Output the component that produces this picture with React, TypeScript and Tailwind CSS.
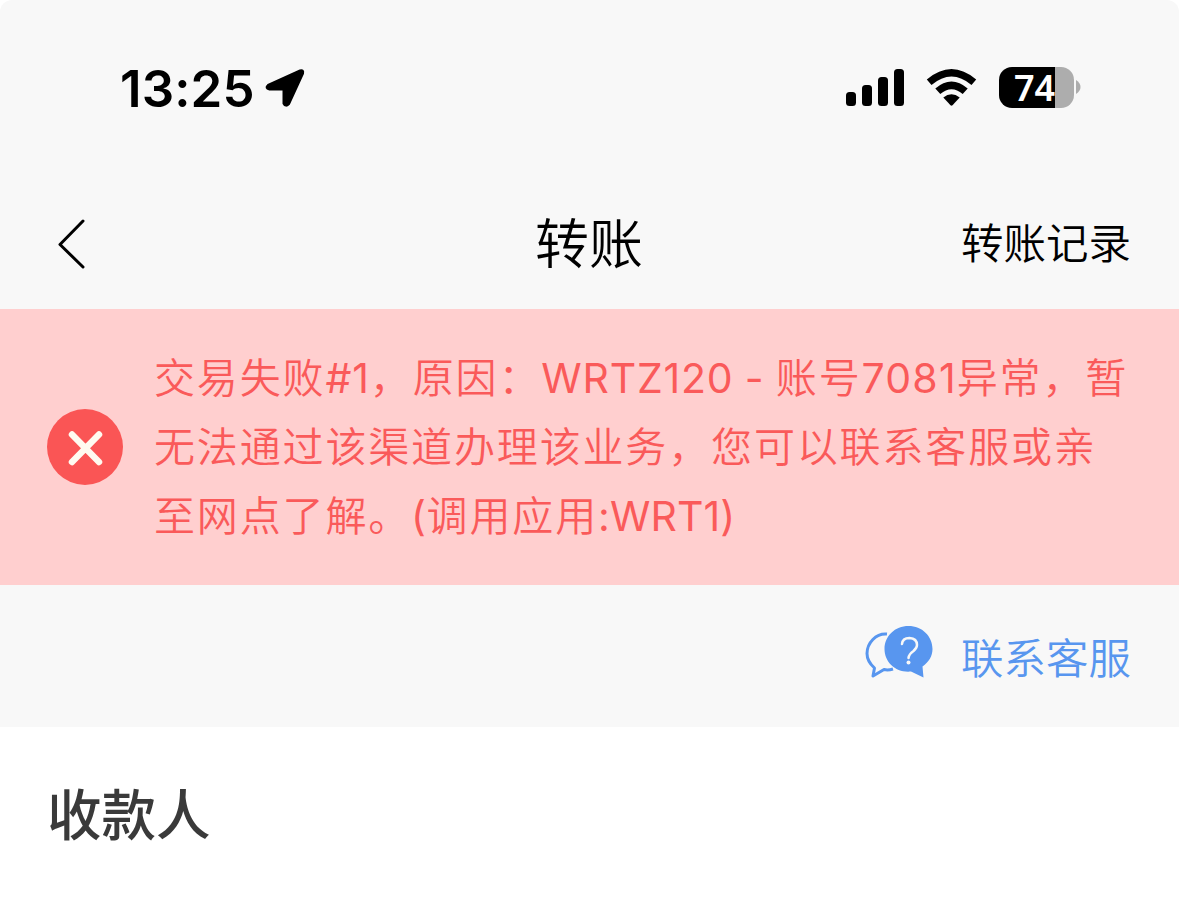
// 提示文案，按行、按中西文分段展示
type Segment = { text: string; className?: string };

const ERROR_LINES: Segment[][] = [
  [
    { text: '交易失败' },
    { text: '#1', className: 'font-[370] tracking-[0.9px]' },
    { text: '，原因：' },
    { text: 'WRTZ120 - ', className: 'font-[370] tracking-[0.8px] [word-spacing:-1px]' },
    { text: '账号' },
    { text: '7081', className: 'font-[370] tracking-[1.2px]' },
    { text: '异常，暂' },
  ],
  [{ text: '无法通过该渠道办理该业务，您可以联系客服或亲' }],
  [
    { text: '至网点了解。' },
    { text: '(', className: 'font-[370] tracking-[0.5px]' },
    { text: '调用应用' },
    { text: ':WRT1)', className: 'font-[370] tracking-[0.1px]' },
  ],
];

function StatusBar() {
  return (
    <div className="flex h-[176px] items-center justify-between pl-[120px] pr-[98px]">
      <div className="flex items-center">
        <span className="mt-[1px] w-[133px] whitespace-nowrap text-[51px] leading-[60px] font-[570] tracking-[0.1px] text-black">
          13:25
        </span>
        <svg className="ml-3 h-[40px] w-[40px]" viewBox="0 0 40 40">
          <path
            d="M3 17 35 2.500Q39 1.500 38 5.500L24 36Q20.500 39.500 18.500 35.500V21.500H4.500Q-.5 20 3 17Z"
            stroke="#000"
            strokeWidth="2"
            strokeLinejoin="round"
          />
        </svg>
      </div>

      <div className="flex items-center">
        {/* 信号 */}
        <svg className="mb-[2px] h-[38px] w-[58px]" viewBox="0 0 58 38">
          <rect x="0" y="24" width="10" height="14" rx="3.500" />
          <rect x="16" y="17" width="10" height="21" rx="3.500" />
          <rect x="32" y="9" width="10" height="29" rx="3.500" />
          <rect x="48" y="1" width="10" height="37" rx="3.500" />
        </svg>
        {/* Wi-Fi */}
        <svg className="mb-[2px] ml-[22px] h-[38px] w-[51px]" viewBox="0 0 51 38">
          <path d="M.8 11.500Q25.500-9.500 50.200 11.500L45.500 17Q25.500 0 5.500 17Z" />
          <path d="M9.300 20.500Q25.500 6.500 41.700 20.500L36.700 26Q25.500 16.500 14.300 26Z" />
          <path d="M17.300 29.500Q25.500 23 33.700 29.500L26.500 37.300Q25.500 38 24.500 37.300Z" />
        </svg>
        {/* 电量 */}
        <div className="mb-[2px] ml-[22px] flex h-[41px] w-[75px] items-center rounded-[13px] bg-[linear-gradient(to_right,#000_56px,#adadad_56px)] pl-[15px]">
          <span className="font-['Noto_Sans',sans-serif] text-[36px] font-semibold leading-[41px] text-white">74</span>
        </div>
        <svg className="mb-[2px] ml-[2px] h-[14px] w-[5px]" viewBox="0 0 5 14">
          <path d="M0 0Q4.500 3 4.500 7T0 14Z" fill="#adadad" />
        </svg>
      </div>
    </div>
  );
}

function NavBar() {
  return (
    <div className="flex h-[133px] items-center justify-between pl-[57px] pr-[48px] text-black">
      <svg className="mt-[2px] h-[50px] w-[170px]" viewBox="0 0 170 50" fill="none">
        <path d="M26 2 3 25.500 26 48" stroke="#000" strokeWidth="3" strokeLinecap="round" strokeLinejoin="round" />
      </svg>
      <h1 className="mt-[4px] mr-[10px] text-[54px] font-[350] leading-[80px]">转账</h1>
      <span className="mt-[2px] text-[42.500px] font-[350] leading-[60px]">转账记录</span>
    </div>
  );
}

function ErrorBanner() {
  return (
    <div className="flex h-[276px] items-center bg-[#ffcfcf] pl-[47px] text-[#fa5a5a]">
      <svg className="mb-[1px] h-[76px] w-[76px] shrink-0" viewBox="0 0 76 76">
        <circle cx="38" cy="38" r="38" fill="#fa5555" />
        <path d="M25 25.500 52 53M52 25.500 25 53" stroke="#fffaf0" strokeWidth="6.500" strokeLinecap="round" />
      </svg>
      <div className="ml-[31px]">
        {ERROR_LINES.map((line, lineIndex) => (
          <p
            key={lineIndex}
            className="whitespace-pre text-[41px] font-[350] leading-[69px] tracking-[1.850px]"
          >
            {line.map((segment) => (
              <span key={segment.text} className={segment.className}>
                {segment.text}
              </span>
            ))}
          </p>
        ))}
      </div>
    </div>
  );
}

function ContactService() {
  return (
    <div className="flex h-[142px] items-center justify-end pr-[48px] text-[#5896ef]">
      <svg className="mb-[8px] h-[54px] w-[70px]" viewBox="0 0 70 54" fill="none">
        <path
          d="M22 9C11 8 2 18 2 28.500C2 35 5 39 9.500 43L8 51L19 44.500Q23 45.500 28 44"
          stroke="currentColor"
          strokeWidth="3"
          strokeLinejoin="round"
        />
        <path
          d="M43.500 1C57 1 67.500 11 67.500 24C67.500 31 64 37 57.500 41.500L58.500 52.500L46 46.500C31 48 19.500 37.500 19.500 24C19.500 11 30 1 43.500 1Z"
          fill="currentColor"
        />
        <path
          d="M37 19Q37.500 13 44.500 13Q52 13.500 52 20Q52 23 48.500 26Q44 29 43.500 33"
          stroke="#f8f8f8"
          strokeWidth="2.500"
          strokeLinecap="round"
        />
        <circle cx="43.500" cy="37.500" r="2" fill="#f8f8f8" />
      </svg>
      <span className="mt-[6px] ml-[26px] text-[42.500px] font-[350] leading-[60px]">联系客服</span>
    </div>
  );
}

export default function App() {
  return (
    <div className="h-[900px] w-[1179px] overflow-hidden bg-white font-['Inter','Noto_Sans_CJK_SC',sans-serif]">
      <div className="rounded-t-[12px] bg-[#f8f8f8]">
        <StatusBar />
        <NavBar />
        <ErrorBanner />
        <ContactService />
      </div>
      <div className="px-[47px] pt-12">
        <h2 className="text-[54.500px] font-medium leading-[80px] text-[#3a3a3a]">收款人</h2>
      </div>
    </div>
  );
}
